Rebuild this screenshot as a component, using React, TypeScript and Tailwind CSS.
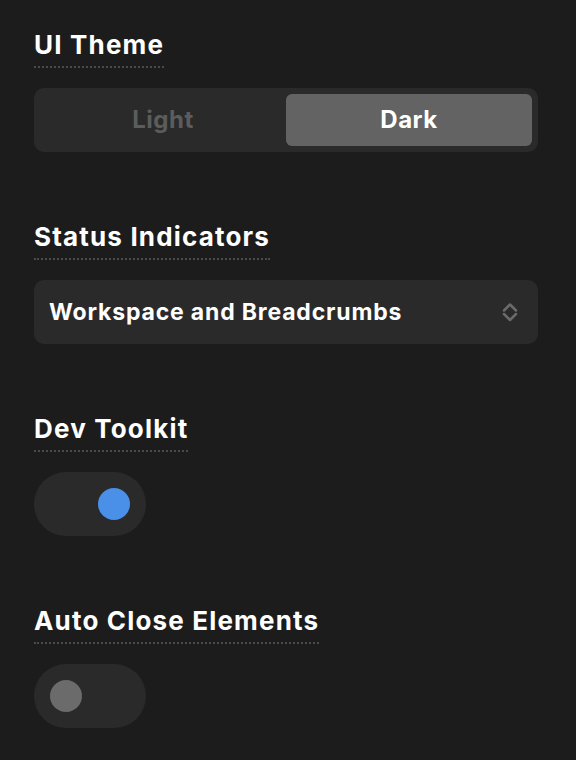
import { useState } from 'react'

function Heading({ children }: { children: string }) {
  return (
    <div>
      <h2 className="inline-block border-b-2 border-dotted border-[#4a4a4a] pb-[5px] text-[26px] font-bold leading-[32px] tracking-[0.045em] text-white">
        {children}
      </h2>
    </div>
  )
}

function Toggle({ on, onChange }: { on: boolean; onChange: (v: boolean) => void }) {
  return (
    <button
      type="button"
      onClick={() => onChange(!on)}
      className={`flex h-16 w-28 items-center rounded-full bg-[#2a2a2a] px-4 ${on ? 'justify-end' : 'justify-start'}`}
    >
      <span className={`h-8 w-8 rounded-full ${on ? 'bg-[#4a8fe8]' : 'bg-[#6b6b6b]'}`} />
    </button>
  )
}

export default function App() {
  const [theme, setTheme] = useState<'light' | 'dark'>('dark')
  const [devToolkit, setDevToolkit] = useState(true)
  const [autoClose, setAutoClose] = useState(false)

  return (
    <div
      className="min-h-[760px] bg-[#1c1c1c] pl-[34px] pr-[38px] pt-[29px]"
      style={{ fontFamily: 'Inter, "Noto Sans", sans-serif' }}
    >
      <section className="h-[192px]">
        <Heading>UI Theme</Heading>
        <div className="mt-[20px] flex h-16 rounded-[10px] bg-[#2a2a2a] p-[6px]">
          {(['light', 'dark'] as const).map((t) => (
            <button
              key={t}
              type="button"
              onClick={() => setTheme(t)}
              className={`flex-1 rounded-[6px] text-[24px] font-bold tracking-[0.02em] ${theme === t ? 'bg-[#636363] text-white' : 'text-[#5c5c5c]'}`}
            >
              {t === 'light' ? 'Light' : 'Dark'}
            </button>
          ))}
        </div>
      </section>

      <section className="h-[192px]">
        <Heading>Status Indicators</Heading>
        <div className="mt-[20px] flex h-16 items-center justify-between rounded-[10px] bg-[#2a2a2a] pl-[15px] pr-[20px]">
          <span className="text-[23px] font-bold tracking-[0.036em] text-white">Workspace and Breadcrumbs</span>
          <svg width="16" height="20" viewBox="0 0 16 20" fill="none" stroke="#6a6a6a" strokeWidth="2.5" strokeLinecap="round" strokeLinejoin="round">
            <path d="M2 8.5 L8 2.5 L14 8.5" />
            <path d="M2 12 L8 18 L14 12" />
          </svg>
        </div>
      </section>

      <section className="h-[192px]">
        <Heading>Dev Toolkit</Heading>
        <div className="mt-[20px]">
          <Toggle on={devToolkit} onChange={setDevToolkit} />
        </div>
      </section>

      <section className="h-[192px]">
        <Heading>Auto Close Elements</Heading>
        <div className="mt-[20px]">
          <Toggle on={autoClose} onChange={setAutoClose} />
        </div>
      </section>
    </div>
  )
}
